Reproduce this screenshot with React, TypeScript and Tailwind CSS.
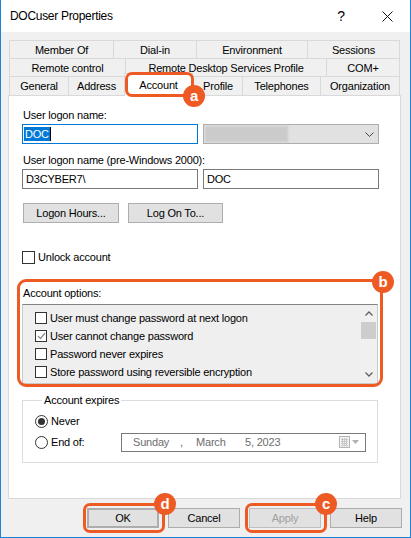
import React from 'react';

const ORANGE = 'border-[#ee5a24]';

const Box = ({ checked = false, size = 'h-[13px] w-[13px]' }: { checked?: boolean; size?: string }) => (
    <span className={`${size} grid shrink-0 place-items-center border border-[#333333] bg-white`}>
        {checked && (
            <svg width="9" height="8" viewBox="0 0 9 8">
                <path d="M1 4 L3.5 6.5 L8 1" fill="none" stroke="#8c8c8c" strokeWidth="1.2" />
            </svg>
        )}
    </span>
);

const Radio = ({ on = false }: { on?: boolean }) => (
    <span className="grid h-[13px] w-[13px] shrink-0 place-items-center rounded-full border border-[#333333] bg-white">
        {on && <span className="h-[7px] w-[7px] rounded-full bg-[#333333]" />}
    </span>
);

const Badge = ({ letter, className }: { letter: string; className: string }) => (
    <div
        className={`absolute z-30 grid h-[22px] w-[22px] place-items-center rounded-full bg-[#ee5a24] pb-[2px] text-[15px] font-bold leading-none text-white ${className}`}
    >
        {letter}
    </div>
);

const Tab = ({ label, w, last = false }: { label: string; w: string; last?: boolean }) => (
    <div
        className={`${w} flex h-full items-center justify-center border-l border-t border-[#d9d9d9] pt-px ${last ? 'border-r' : ''}`}
    >
        {label}
    </div>
);

const Btn = ({ label, className = '' }: { label: string; className?: string }) => (
    <div className={`flex h-[20px] items-center justify-center border border-[#adadad] bg-[#e1e1e1] ${className}`}>{label}</div>
);

export default function App() {
    const options = [
        { label: 'User must change password at next logon', checked: false },
        { label: 'User cannot change password', checked: true },
        { label: 'Password never expires', checked: false },
        { label: 'Store password using reversible encryption', checked: false },
    ];

    return (
        <div className="relative flex h-[538px] w-[411px] flex-col overflow-hidden border-x border-b border-[#1883d7] bg-[#f0f0f0] font-['Liberation_Sans',Arial,sans-serif] text-[11px] tracking-[-0.2px] text-black">
            {/* title bar */}
            <div className="flex h-[32px] shrink-0 items-center bg-white pl-[9px]">
                <span className="flex-1 text-[12px] tracking-[-0.3px]">DOCuser Properties</span>
                <div className="grid h-[32px] w-[46px] place-items-center text-[14px]">?</div>
                <div className="grid h-[32px] w-[46px] place-items-center">
                    <svg width="11" height="11" viewBox="0 0 11 11">
                        <path d="M0.5 0.5 L10.5 10.5 M10.5 0.5 L0.5 10.5" stroke="#111" strokeWidth="1" />
                    </svg>
                </div>
            </div>

            {/* tabs */}
            <div className="ml-[8px] mt-[8px] w-[391px]">
                <div className="flex h-[18px]">
                    <Tab label="Member Of" w="w-[104px]" />
                    <Tab label="Dial-in" w="w-[83px]" />
                    <Tab label="Environment" w="w-[111px]" />
                    <Tab label="Sessions" w="w-[93px]" last />
                </div>
                <div className="flex h-[18px]">
                    <Tab label="Remote control" w="w-[116px]" />
                    <Tab label="Remote Desktop Services Profile" w="w-[201px]" />
                    <Tab label="COM+" w="w-[74px]" last />
                </div>
                <div className="flex h-[19px] items-end">
                    <Tab label="General" w="w-[59px]" />
                    <Tab label="Address" w="w-[56px]" />
                    <div className="relative z-10 -mb-px flex h-[23px] w-[69px] items-start justify-center border-x border-t border-[#d9d9d9] bg-white pt-[3px]">
                        Account
                    </div>
                    <Tab label="Profile" w="w-[49px]" />
                    <Tab label="Telephones" w="w-[78px]" />
                    <Tab label="Organization" w="w-[80px]" last />
                </div>
            </div>

            {/* panel */}
            <div className="ml-[7px] flex h-[404px] w-[393px] flex-col border border-[#d9d9d9] bg-white pl-[13px] pt-[12px]">
                <div className="pl-px leading-[14px]">User logon name:</div>
                <div className="mt-[2px] flex gap-[5px]">
                    <div className="flex h-[20px] w-[176px] items-center border border-[#0078d7] pl-px">
                        <span className="bg-[#0078d7] px-[1px] leading-[14px] text-white">DOC</span>
                        <span className="h-[14px] w-px bg-black" />
                    </div>
                    <div className="flex h-[20px] w-[176px] items-center justify-between border border-[#adadad] bg-[#e1e1e1] pl-px pr-[4px]">
                        <span className="h-[16px] w-[83px] bg-[#cbcbcb] blur-[1px]" />
                        <svg width="9" height="5" viewBox="0 0 9 5">
                            <path d="M0.5 0.5 L4.5 4.5 L8.5 0.5" fill="none" stroke="#444" strokeWidth="1" />
                        </svg>
                    </div>
                </div>

                <div className="mt-[9px] pl-px leading-[14px]">User logon name (pre-Windows 2000):</div>
                <div className="mt-[2px] flex gap-[5px]">
                    <div className="flex h-[20px] w-[176px] items-center border border-[#7a7a7a] pl-[3px]">D3CYBER7\</div>
                    <div className="flex h-[20px] w-[176px] items-center border border-[#7a7a7a] pl-[3px]">DOC</div>
                </div>

                <div className="mt-[14px] flex gap-[9px] pl-px">
                    <Btn label="Logon Hours..." className="w-[96px]" />
                    <Btn label="Log On To..." className="w-[95px]" />
                </div>

                <div className="mt-[28px] flex h-[13px] items-center gap-[3px]">
                    <Box />
                    <span>Unlock account</span>
                </div>

                <div className="mt-[22px] pl-px leading-[14px]">Account options:</div>
                <div className="mt-[4px] flex h-[80px] w-[356px] border border-[#c9c9c9] border-t-[#828282] bg-[#efefef]">
                    <div className="flex flex-1 flex-col pl-[12px] pt-[4px]">
                        {options.map((o) => (
                            <div key={o.label} className="flex h-[18px] items-center gap-[3px]">
                                <Box checked={o.checked} size="h-[12px] w-[12px]" />
                                <span>{o.label}</span>
                            </div>
                        ))}
                    </div>
                    <div className="flex w-[17px] flex-col bg-[#f0f0f0]">
                        <div className="grid h-[17px] place-items-center">
                            <svg width="8" height="5" viewBox="0 0 8 5">
                                <path d="M0.5 4.5 L4 1 L7.5 4.5" fill="none" stroke="#606060" strokeWidth="1.3" />
                            </svg>
                        </div>
                        <div className="mx-px h-[17px] bg-[#cdcdcd]" />
                        <div className="flex-1" />
                        <div className="grid h-[17px] place-items-center">
                            <svg width="8" height="5" viewBox="0 0 8 5">
                                <path d="M0.5 0.5 L4 4 L7.5 0.5" fill="none" stroke="#606060" strokeWidth="1.3" />
                            </svg>
                        </div>
                    </div>
                </div>

                <fieldset className="mt-[9px] w-[356px] border border-[#dcdcdc] pb-[10px] pl-[12px]">
                    <legend className="ml-[7px] px-[2px] leading-[14px]">Account expires</legend>
                    <div className="mt-[6px] flex h-[16px] items-center gap-[3px]">
                        <Radio on />
                        <span>Never</span>
                    </div>
                    <div className="mt-[3px] flex h-[20px] items-center">
                        <div className="flex w-[86px] items-center gap-[3px]">
                            <Radio />
                            <span>End of:</span>
                        </div>
                        <div className="flex h-[19px] w-[245px] items-center border border-[#7a7a7a] bg-white pl-[11px] text-[#6d6d6d]">
                            <span className="w-[47px]">Sunday</span>
                            <span className="w-[16px]">,</span>
                            <span className="w-[49px]">March</span>
                            <span>5, 2023</span>
                            <div className="ml-auto mr-[6px] flex items-center gap-[2px]">
                                <svg width="11" height="12" viewBox="0 0 11 12">
                                    <rect x="0.5" y="0.5" width="10" height="11" fill="#f4f4f4" stroke="#b5b5b5" />
                                    <path d="M2 3.5 H9 M2 5.5 H9 M2 7.5 H9 M2 9.5 H9 M3.5 2 V10.5 M5.5 2 V10.5 M7.5 2 V10.5" stroke="#c8c8c8" strokeWidth="1" />
                                </svg>
                                <svg width="7" height="4" viewBox="0 0 7 4">
                                    <path d="M0 0 H7 L3.5 4 Z" fill="#b0b0b0" />
                                </svg>
                            </div>
                        </div>
                    </div>
                </fieldset>
            </div>

            {/* dialog buttons */}
            <div className="mt-[9px] flex justify-end gap-[9px] pr-[8px]">
                <Btn label="OK" className="w-[72px] border-2 border-[#0078d7]" />
                <Btn label="Cancel" className="w-[72px]" />
                <Btn label="Apply" className="w-[72px] border-[#bfbfbf] bg-[#cccccc] text-[#a0a0a0]" />
                <Btn label="Help" className="w-[72px]" />
            </div>

            {/* callouts */}
            <div className={`absolute left-[124px] top-[72px] z-20 h-[25px] w-[69px] rounded-[7px] border-[3px] ${ORANGE}`} />
            <Badge letter="a" className="left-[182px] top-[85px]" />
            <div className={`absolute left-[16px] top-[279px] z-20 h-[108px] w-[366px] rounded-[9px] border-[3px] ${ORANGE}`} />
            <Badge letter="b" className="left-[371px] top-[271px]" />
            <div className={`absolute left-[82px] top-[503px] z-20 h-[30px] w-[82px] rounded-[7px] border-[3px] ${ORANGE}`} />
            <Badge letter="d" className="left-[153px] top-[493px]" />
            <div className={`absolute left-[244px] top-[503px] z-20 h-[30px] w-[82px] rounded-[7px] border-[3px] ${ORANGE}`} />
            <Badge letter="c" className="left-[314px] top-[493px]" />
        </div>
    );
}
